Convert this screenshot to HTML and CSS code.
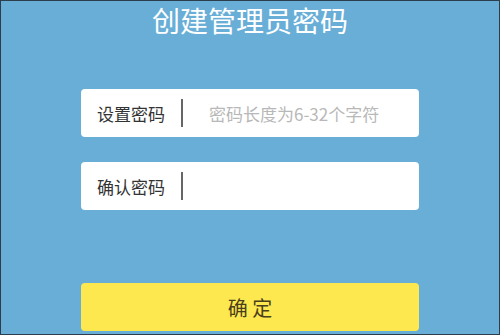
FILE: index.html
```html
<!DOCTYPE html>
<html lang="zh">
<head>
<meta charset="utf-8">
<link rel="stylesheet" href="styles.css">
</head>
<body>
<div class="screen">
  <h1 class="title">创建管理员密码</h1>
  <div class="form">
    <div class="field">
      <span class="label">设置密码</span>
      <span class="divider"></span>
      <span class="placeholder">密码长度为6-32个字符</span>
    </div>
    <div class="field">
      <span class="label">确认密码</span>
      <span class="divider"></span>
      <span class="placeholder"></span>
    </div>
  </div>
  <div class="button">确 定</div>
</div>
</body>
</html>
```

FILE: styles.css
```css
html, body {
  margin: 0;
  padding: 0;
}
body {
  width: 500px;
  height: 335px;
  overflow: hidden;
  font-family: "Noto Sans CJK SC", "Noto Sans", sans-serif;
}
.screen {
  box-sizing: border-box;
  width: 500px;
  height: 335px;
  background: #68aed7;
  border: 1px solid #2c3e4c;
  display: flex;
  flex-direction: column;
  align-items: center;
}
.title {
  margin: 0;
  margin-top: 1px;
  font-size: 28px;
  line-height: 36px;
  font-weight: 400;
  color: #ffffff;
}
.form {
  margin-top: 51px;
  display: flex;
  flex-direction: column;
  gap: 25px;
}
.field {
  width: 338px;
  height: 48px;
  background: #ffffff;
  border-radius: 4px;
  display: flex;
  align-items: center;
  box-sizing: border-box;
  padding-left: 16px;
}
.label {
  font-size: 17px;
  color: #333333;
  width: 68px;
}
.divider {
  width: 2px;
  height: 28px;
  background: #666666;
  margin-left: 16px;
}
.placeholder {
  margin-left: 26px;
  font-size: 17px;
  color: #b8b8b8;
}
.button {
  margin-top: 73px;
  width: 338px;
  height: 48px;
  background: #fde84f;
  border-radius: 4px;
  display: flex;
  align-items: center;
  justify-content: center;
  font-size: 20px;
  color: #4a3f1c;
}
```
